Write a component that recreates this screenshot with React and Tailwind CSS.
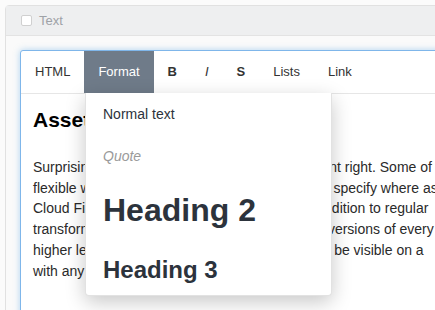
import React from 'react';

const tools = ['HTML', 'Format', 'B', 'I', 'S', 'Lists', 'Link'];

const lines = [
  'Surprisingly, this CMS gets its asset management right. Some of the',
  'flexible way to handle all uploads lets you easily specify where assets',
  'Cloud Files and S3 buckets are supported, in addition to regular',
  'transformations let us generate resized smaller versions of every image',
  'higher level image settings, so they will instantly be visible on a',
  'with any CDN of your choice.',
];

function ToolButton({ label, active }) {
  const style =
    label === 'B' ? 'font-bold' : label === 'I' ? 'italic' : label === 'S' ? 'font-semibold' : '';
  return (
    <div
      className={`h-[42px] px-[14px] flex items-center text-[13px] ${
        active ? 'bg-[#6f7b89] text-white' : 'text-[#333]'
      } ${style}`}
    >
      {label}
    </div>
  );
}

function FormatMenu() {
  return (
    <div className="absolute left-[64px] top-[42px] w-[247px] pt-[2px] bg-white border border-[#e2e2e2] border-t-0 rounded-b-[4px] shadow-[0_6px_20px_rgba(0,0,0,0.22)] text-[#2c333c]">
      <div className="h-[38px] flex items-center px-[17px] text-[14px] pt-[1px]">Normal text</div>
      <div className="h-[46px] flex items-center px-[17px] text-[14px] italic text-[#9a9a9a]">Quote</div>
      <div className="h-[62px] flex items-center px-[17px] text-[32px] font-bold">Heading 2</div>
      <div className="h-[54px] flex items-center px-[17px] pt-[4px] text-[24px] font-bold">Heading 3</div>
    </div>
  );
}

export default function App() {
  return (
    <div
      className="w-[435px] h-[310px] overflow-hidden bg-[#fbfbfb] pt-[5px] pl-[5px]"
      style={{ fontFamily: '"Liberation Sans", Arial, sans-serif' }}
    >
      <div className="w-[520px] h-[400px] rounded-tl-[4px] border border-[#e1e1e1] bg-[#fafafa]">
        {/* header */}
        <div className="h-[30px] bg-[#eeeff0] border-b border-[#e3e3e3] flex items-center pl-[15px] gap-[7px]">
          <div className="w-[11px] h-[11px] bg-white border border-[#d0d0d0] rounded-[2px]" />
          <span className="text-[13px] text-[#9ea2a7]">Text</span>
        </div>

        {/* body */}
        <div className="pt-[14px] pl-[14px]">
          <div className="relative bg-white border border-[#7fb6ea] rounded-tl-[3px] shadow-[0_0_6px_rgba(102,175,233,0.5)] h-[300px]">
            <div className="flex border-b border-[#e6e6e6]">
              {tools.map((t) => (
                <ToolButton key={t} label={t} active={t === 'Format'} />
              ))}
            </div>

            <div className="pl-[12px] pt-[13px] text-[#222]">
              <h1 className="text-[21px] leading-[25px] font-bold text-black mb-[25px]">Assets</h1>
              <div className="text-[14px] leading-[20.7px] text-[#2a2a2a]">
                {lines.map((l, i) => (
                  <div key={i} className="whitespace-nowrap">
                    {l}
                  </div>
                ))}
              </div>
            </div>

            <FormatMenu />
          </div>
        </div>
      </div>
    </div>
  );
}
